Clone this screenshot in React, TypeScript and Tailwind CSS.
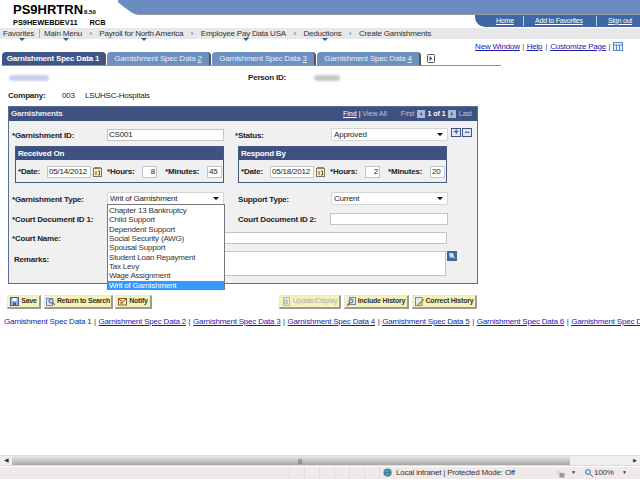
import React from "react";

const Chev = () => <span className="text-[#666] mx-[7.5px] text-[8px]">›</span>;

function Crumb({ t, arrow = true, cls = "" }: { t: string; arrow?: boolean; cls?: string }) {
  return (
    <span className={`relative ${cls}`}>
      {t}
      {arrow && <span className="absolute left-1/2 top-[10px] w-0 h-0 border-l-[3px] border-r-[3px] border-t-[3px] border-l-transparent border-r-transparent border-t-[#35598f]" />}
    </span>
  );
}

function Tab({ n, active = false }: { n: number; active?: boolean }) {
  return (
    <div className={`w-[104px] h-[13px] mr-[1px] rounded-t-[4px] flex items-center justify-center whitespace-nowrap text-[8px] border-r-2 border-r-[#555] ${active ? "bg-[#3d5587] text-white font-bold" : "bg-[#6d90c2] text-[#e8eef6]"}`}>
      {active ? `Garnishment Spec Data ${n}` : <span>Garnishment Spec Data <u>{n}</u></span>}
    </div>
  );
}

const Label = ({ t, w, cls = "" }: { t: string; w: number; cls?: string }) => (
  <div style={{ width: w }} className={`font-bold text-[8px] text-[#222] shrink-0 whitespace-nowrap ${cls}`}>{t}</div>
);

function Input({ v = "", w, right = false }: { v?: string; w: number; right?: boolean }) {
  return (
    <div style={{ width: w }} className={`h-[12px] shrink-0 bg-white border border-[#c4c4c4] leading-[10px] text-[8px] text-[#222] px-[1px] ${right ? "text-right" : ""}`}>{v}</div>
  );
}

function Select({ v, w }: { v: string; w: number }) {
  return (
    <div style={{ width: w }} className="h-[13px] shrink-0 bg-white border border-[#d4d4d4] rounded-[1px] flex items-center justify-between text-[8px] text-[#222] pl-[2px] pr-[4px]">
      <span>{v}</span>
      <span className="w-0 h-0 border-l-[3px] border-r-[3px] border-t-[3px] border-l-transparent border-r-transparent border-t-black" />
    </div>
  );
}

const CalIcon = () => (
  <svg width="9" height="10" viewBox="0 0 9 10" className="ml-[2px] mr-[5px] shrink-0">
    <rect x="0.5" y="1.5" width="8" height="8" fill="#f4eec0" stroke="#7a7a5a" />
    <rect x="1" y="0" width="7" height="2" fill="#9a8a4a" />
    <path d="M3 4v4M5 4h1.5v4H5" stroke="#333" fill="none" strokeWidth="0.8" />
  </svg>
);

function Group({ title, date, h, m, cls = "" }: { title: string; date: string; h: string; m: string; cls?: string }) {
  return (
    <div className={`w-[209px] h-[37px] border border-[#46597f] ${cls}`}>
      <div className="h-[13px] bg-[#3f5180] text-white font-bold text-[8px] leading-[13px] pl-[2px]">{title}</div>
      <div className="flex items-center h-[22px] pl-[2px] pt-[2px]">
        <Label t="*Date:" w={29} />
        <Input v={date} w={44} />
        <CalIcon />
        <Label t="*Hours:" w={35} />
        <Input v={h} w={15} right />
        <Label t="*Minutes:" w={42} cls="ml-[8px]" />
        <Input v={m} w={15} />
      </div>
    </div>
  );
}

const icons: Record<string, React.ReactNode> = {
  save: <><rect x="0.5" y="0.5" width="8" height="8" fill="#8fb0dc" stroke="#3f5f9a" /><rect x="2.5" y="1" width="4" height="3" fill="#fff" /><rect x="3" y="5.5" width="3" height="3" fill="#3f5f9a" /></>,
  ret: <><rect x="0.5" y="1.5" width="6" height="7" fill="#dfe8f5" stroke="#6a8ac0" /><circle cx="5" cy="4" r="2.2" fill="#bcd4ee" stroke="#4a6a9a" /><path d="M6.5 5.5L9 8" stroke="#a06030" strokeWidth="1.2" /></>,
  notify: <><rect x="0.5" y="1.5" width="8" height="6.5" fill="#f8efc0" stroke="#806030" /><path d="M1 2l3.5 3L8 2M2 6h3" stroke="#a04020" fill="none" /></>,
  update: <><rect x="1.5" y="0.5" width="6" height="8" fill="#e8e8e0" stroke="#bbb" /><circle cx="3.5" cy="5" r="2" fill="#ddd" stroke="#aaa" /></>,
  incl: <><rect x="2.5" y="0.5" width="6" height="7" fill="#dfe8f5" stroke="#6a8ac0" /><circle cx="4" cy="4" r="2" fill="#bcd4ee" stroke="#4a6a9a" /><path d="M2.5 6L0 9" stroke="#c04020" strokeWidth="1.4" /></>,
  corr: <><rect x="0.5" y="0.5" width="6.5" height="8" fill="#dfe8f5" stroke="#6a8ac0" /><path d="M9 2L3.5 7.5 2.5 9" stroke="#d0901a" strokeWidth="1.6" fill="none" /></>,
};

function Btn({ t, w, icon, disabled = false, cls = "" }: { t: string; w: number; icon: string; disabled?: boolean; cls?: string }) {
  return (
    <div style={{ width: w }} className={`h-[14px] shrink-0 flex items-center justify-center gap-[2px] whitespace-nowrap bg-[#f5f2b8] border-r-2 border-b-2 border-l border-t border-r-[#9a9a9a] border-b-[#9a9a9a] border-l-[#e8e8e8] border-t-[#e8e8e8] text-[7px] font-bold ${disabled ? "text-[#b0b0b0] font-normal" : "text-[#333]"} ${cls}`}>
      <svg width="9" height="9" viewBox="0 0 9 9" className="shrink-0">{icons[icon]}</svg>
      <span>{t}</span>
    </div>
  );
}

const PageArrow = ({ dir }: { dir: "l" | "r" }) => (
  <svg width="8" height="8" viewBox="0 0 8 8" className="mx-[2.5px] shrink-0">
    <rect width="8" height="8" fill="#a8bad6" />
    <path d={dir === "l" ? "M5 2L3 4l2 2z" : "M3 2l2 2-2 2z"} fill="#3f5180" />
  </svg>
);

const items = ["Chapter 13 Bankruptcy", "Child Support", "Dependent Support", "Social Security (AWG)", "Spousal Support", "Student Loan Repayment", "Tax Levy", "Wage Assignment", "Writ of Garnishment"];

const Sep = () => <span className="text-[#333] mx-[2.6px]">|</span>;

export default function App() {
  const links = [1, 2, 3, 4, 5, 6, 7];
  return (
    <div className="relative w-[640px] h-[480px] overflow-hidden bg-white font-['Liberation_Sans',Arial,sans-serif] text-[8px] tracking-[-0.2px]">
      {/* Header */}
      <div className="flex h-[27px]">
        <div className="w-[118px] shrink-0 pl-[13px] pt-[3px] text-black">
          <div className="font-bold text-[13px] leading-[14px] tracking-normal whitespace-nowrap">PS9HRTRN<span className="text-[6px] ml-[1px]">8.50</span></div>
          <div className="font-bold text-[7.4px] leading-[8px] mt-[0px] tracking-normal whitespace-nowrap">PS9HEWEBDEV11<span className="ml-[12px]">RCB</span></div>
        </div>
        <div className="flex-1 flex flex-col relative">
          <svg width="522" height="15" viewBox="0 0 522 15" className="block shrink-0">
            <path d="M-3 0 C8 8 14 15 22 15 L522 15 L522 0 Z" fill="#6a8cc0" />
            <path d="M20 14.5 L522 14.5" stroke="#9a9a9a" strokeWidth="1" />
          </svg>
          <div className="ml-[357px] flex-1 bg-[#3f67a5] rounded-bl-[10px] flex items-center text-white text-[7px] underline relative">
            <span className="ml-[21px] w-[27px]">Home</span>
            <span className="w-[73px] border-l border-[#bcd] pl-[11px]">Add to Favorites</span>
            <span className="border-l border-[#bcd] pl-[11px]">Sign out</span>
          </div>
        </div>
      </div>
      <div className="h-[11px] bg-[#e8e8e8] mt-[1px] flex items-center pl-[3px] text-[8px] text-[#333] whitespace-nowrap">
        <Crumb t="Favorites" />
        <span className="border-l border-[#aaa] h-[9px] mx-[4.5px]" />
        <Crumb t="Main Menu" />
        <Chev />
        <Crumb t="Payroll for North America" />
        <Chev />
        <Crumb t="Employee Pay Data USA" />
        <Chev />
        <Crumb t="Deductions" />
        <Chev />
        <Crumb t="Create Garnishments" arrow={false} />
      </div>
      {/* page links */}
      <div className="h-[11px] mt-[2px] flex items-center justify-end pr-[17px] text-[8px] text-[#1a1ab0]">
        <u>New Window</u><span className="text-[#a33] mx-[2.5px]">|</span><u>Help</u><span className="text-[#35598f] mx-[3px]">|</span><u>Customize Page</u><span className="text-[#333] mx-[2.5px]">|</span>
        <svg width="10" height="9" viewBox="0 0 10 9"><rect x="0.5" y="0.5" width="9" height="8" fill="#e8f0f8" stroke="#5a8ac0" /><path d="M0 3h10M3.5 3v6M6.5 3v6" stroke="#5a8ac0" /></svg>
      </div>
      {/* Tabs */}
      <div className="flex w-[499px] h-[13px] ml-[2px] border-b border-[#7a94b8] box-content">
        <Tab n={1} active />
        <Tab n={2} />
        <Tab n={3} />
        <Tab n={4} />
        <svg width="9" height="9" viewBox="0 0 9 9" className="ml-[5px] mt-[2px]"><rect x="0.5" y="0.5" width="7" height="8" rx="1" fill="#fff" stroke="#555" /><path d="M2.5 2l3 2.5-3 2.5z" fill="#3f5180" /></svg>
      </div>
      {/* Identity */}
      <div className="flex items-center h-[10px] mt-[7px] pl-[9px]">
        <div className="w-[40px] h-[6px] bg-[#c8cdf0] blur-[1px] rounded" />
        <div className="ml-[199px] w-[66px] font-bold text-[#222]">Person ID:</div>
        <div className="w-[26px] h-[6px] bg-[#c8c8c8] blur-[1px] rounded" />
      </div>
      <div className="flex items-center h-[10px] mt-[8px] pl-[8px] text-[#222]">
        <span className="font-bold w-[54px]">Company:</span>
        <span className="w-[23px]">003</span>
        <span>LSUHSC-Hospitals</span>
      </div>
      {/* Panel */}
      <div className="relative ml-[8px] mt-[5px] w-[470px] h-[178px] bg-[#f0f0f0] border border-[#5b6d96]">
        <div className="h-[14px] bg-[#3f5180] flex items-center justify-between text-white px-[2px]">
          <span className="font-bold text-[8px] text-[#e6ebf3]">Garnishments</span>
          <div className="flex items-center text-[7px] tracking-normal text-[#b9c6dc] mr-[3px]">
            <u className="text-white">Find</u><span className="mx-[2px] text-white">|</span><span>View All</span>
            <span className="ml-[14px]">First</span>
            <PageArrow dir="l" />
            <span className="font-bold text-white">1 of 1</span>
            <PageArrow dir="r" />
            <span>Last</span>
          </div>
        </div>
        <div className="pl-[3px]">
          {/* row 1 */}
          <div className="flex items-center h-[13px] mt-[7px]">
            <Label t="*Garnishment ID:" w={95} cls="pt-[3px]" />
            <Input v="CS001" w={117} />
            <Label t="*Status:" w={96} cls="ml-[11px] pt-[3px]" />
            <Select v="Approved" w={117} />
            <div className="flex self-start ml-[3px] gap-[1px]">
              <span className="w-[10px] h-[9px] bg-[#e4e8f0] border border-[#3f5180] text-[#2a4a90] font-bold text-[9px] leading-[7px] text-center">+</span>
              <span className="w-[10px] h-[9px] bg-[#e4e8f0] border border-[#3f5180] text-[#2a4a90] font-bold text-[9px] leading-[6px] text-center">−</span>
            </div>
          </div>
          {/* groups */}
          <div className="flex mt-[5px] ml-[3px]">
            <Group title="Received On" date="05/14/2012" h="8" m="45" />
            <Group title="Respond By" date="05/18/2012" h="2" m="20" cls="ml-[14px]" />
          </div>
          {/* row type */}
          <div className="flex items-center h-[13px] mt-[9px]">
            <Label t="*Garnishment Type:" w={95} cls="pt-[3px]" />
            <Select v="Writ of Garnishment" w={117} />
            <Label t="Support Type:" w={93} cls="ml-[14px] pt-[3px]" />
            <Select v="Current" w={117} />
          </div>
          {/* court doc */}
          <div className="flex items-center h-[13px] mt-[7px]">
            <Label t="*Court Document ID 1:" w={95} cls="pt-[3px]" />
            <Input w={117} />
            <Label t="Court Document ID 2:" w={92} cls="ml-[14px] pt-[3px]" />
            <Input w={118} />
          </div>
          {/* court name */}
          <div className="flex items-center h-[13px] mt-[6px]">
            <Label t="*Court Name:" w={95} cls="pt-[3px]" />
            <Input w={340} />
          </div>
          {/* remarks */}
          <div className="flex mt-[7px]">
            <Label t="Remarks:" w={95} cls="pl-[2px] pt-[3px]" />
            <div className="w-[339px] h-[25px] bg-white border border-[#c4c4c4]" />
            <svg width="10" height="10" viewBox="0 0 10 10" className="ml-[1px]"><rect width="10" height="10" fill="#3f6a9a" /><path d="M2 2h4l2 6-3-2-2 1z" fill="#cfe0f0" /></svg>
          </div>
        </div>
        {/* Dropdown */}
        <div className="absolute left-[98px] top-[97px] w-[118px] h-[86px] z-10 bg-white border border-[#777] pt-[1px] text-[8px] text-[#333] leading-[9.35px]">
          {items.map((it, i) => (
            <div key={it} className={`pl-[1px] whitespace-nowrap ${i === items.length - 1 ? "bg-[#3399ff] text-white" : ""}`}>{it}</div>
          ))}
        </div>
      </div>
      {/* Buttons */}
      <div className="flex mt-[11px] ml-[7px]">
        <Btn t="Save" w={34} icon="save" />
        <Btn t="Return to Search" w={69} icon="ret" cls="ml-[3px]" />
        <Btn t="Notify" w={37} icon="notify" cls="ml-[2px]" />
        <Btn t="Update/Display" w={62} icon="update" disabled cls="ml-[127px]" />
        <Btn t="Include History" w={65} icon="incl" cls="ml-[3px]" />
        <Btn t="Correct History" w={65} icon="corr" cls="ml-[3px]" />
      </div>
      {/* Links */}
      <div className="h-[10px] mt-[8px] pl-[4px] whitespace-nowrap text-[8px] leading-[10px] text-[#1a1ab0]">
        {links.map((n, i) => (
          <span key={n}>
            {i === 0 ? <span>Garnishment Spec Data 1</span> : <u>Garnishment Spec Data {n}</u>}
            {i < links.length - 1 && <Sep />}
          </span>
        ))}
      </div>
      {/* Bottom chrome */}
      <div className="absolute left-0 right-0 bottom-0 pb-[1px]">
        <div className="flex h-[11px] mb-[1px] bg-[#efefef] border-y border-[#dcdcdc]">
          <div className="w-[12px] text-[6px] leading-[9px] text-center text-[#333]">◀</div>
          <div className="w-[558px] bg-gradient-to-b from-[#e8e8e8] to-[#a8a8a8] rounded-[1px] flex items-center justify-center text-[6px] leading-none text-[#444] pl-[18px]">|||</div>
          <div className="flex-1 text-right pr-[3px] text-[5px] leading-[9px] text-[#333]">▶</div>
        </div>
        <div className="flex items-center h-[12px] bg-[#f1e9e9] text-[8px] text-[#333] whitespace-nowrap">
          <div className="w-[290px] h-full border-r border-[#ddd]" />
          {[0, 1, 2, 3, 4, 5].map((k) => (
            <div key={k} className="w-[15px] h-full border-r border-[#ddd]" />
          ))}
          <svg width="10" height="10" viewBox="0 0 11 11" className="ml-[3px]"><circle cx="5" cy="5" r="4.5" fill="#3a7ac0" /><path d="M2 4c2-2 3 0 5-1M3 8c1-2 3-1 4-2" stroke="#6abf5a" strokeWidth="1.5" fill="none" /></svg>
          <span className="ml-[3px] w-[160px]">Local intranet | Protected Mode: Off</span>
          <svg width="9" height="9" viewBox="0 0 9 9"><circle cx="3" cy="4" r="2.5" fill="#d8d8d8" /><rect x="3.5" y="4" width="5" height="4.5" fill="#999" /></svg>
          <span className="text-[5px] w-[20px] pl-[6px]">▼</span>
          <svg width="8" height="8" viewBox="0 0 8 8"><circle cx="3" cy="3" r="2.5" fill="#cfe0f0" stroke="#4a7ab0" /><path d="M5 5l3 3" stroke="#666" /></svg>
          <span className="ml-[1px] w-[28px]">100%</span>
          <span className="text-[5px]">▼</span>
        </div>
      </div>
    </div>
  );
}
